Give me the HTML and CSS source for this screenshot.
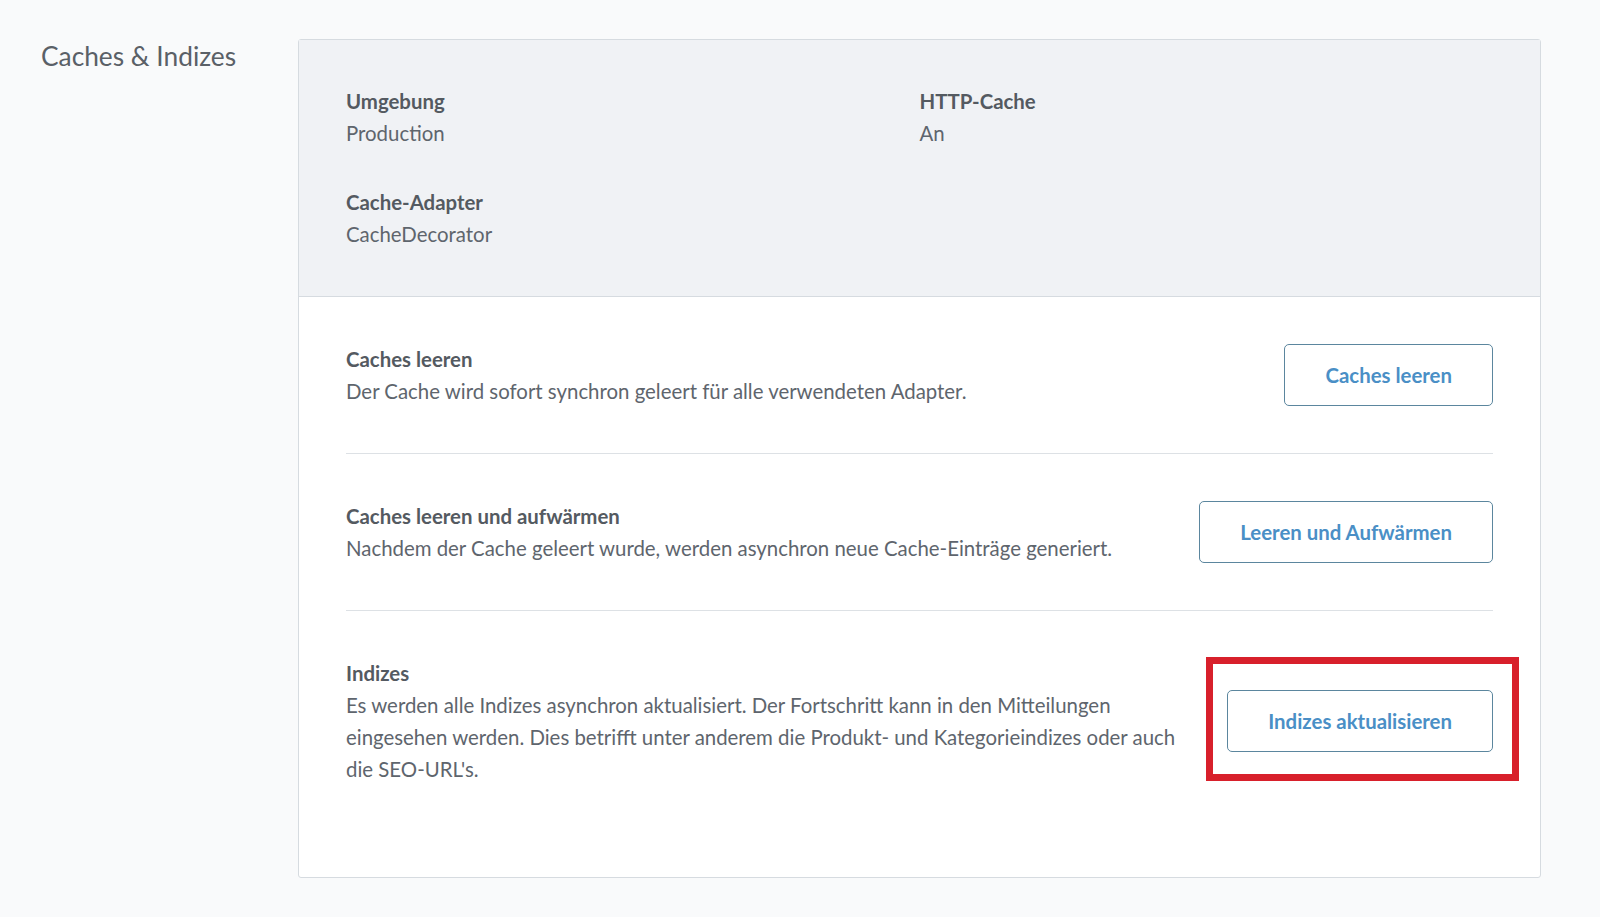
FILE: index.html
```html
<!DOCTYPE html>
<html lang="de">
<head>
    <meta charset="UTF-8">
    <meta name="viewport" content="width=device-width, initial-scale=1.0">
    <title>Caches &amp; Indizes</title>
    <link rel="stylesheet" href="styles.css">
</head>
<body>
    <div class="page">
        <div class="side">
            <h1 class="side-title">Caches &amp; Indizes</h1>
        </div>
        <div class="card">
            <div class="info">
                <div class="info-item">
                    <div class="label">Umgebung</div>
                    <div class="value">Production</div>
                </div>
                <div class="info-item">
                    <div class="label">HTTP-Cache</div>
                    <div class="value">An</div>
                </div>
                <div class="info-item">
                    <div class="label">Cache-Adapter</div>
                    <div class="value">CacheDecorator</div>
                </div>
            </div>
            <div class="actions">
                <div class="action-row">
                    <div class="action-text">
                        <div class="label">Caches leeren</div>
                        <div class="value">Der Cache wird sofort synchron geleert für alle verwendeten Adapter.</div>
                    </div>
                    <div class="btn-wrap">
                        <button class="btn">Caches leeren</button>
                    </div>
                </div>
                <div class="action-row">
                    <div class="action-text">
                        <div class="label">Caches leeren und aufwärmen</div>
                        <div class="value">Nachdem der Cache geleert wurde, werden asynchron neue Cache-Einträge generiert.</div>
                    </div>
                    <div class="btn-wrap">
                        <button class="btn">Leeren und Aufwärmen</button>
                    </div>
                </div>
                <div class="action-row">
                    <div class="action-text">
                        <div class="label">Indizes</div>
                        <div class="value">Es werden alle Indizes asynchron aktualisiert. Der Fortschritt kann in den Mitteilungen eingesehen werden. Dies betrifft unter anderem die Produkt- und Kategorieindizes oder auch die SEO-URL's.</div>
                    </div>
                    <div class="btn-wrap">
                        <button class="btn">Indizes aktualisieren</button>
                        <!-- markierung -->
                        <span class="highlight"></span>
                    </div>
                </div>
            </div>
        </div>
    </div>
</body>
</html>
```

FILE: styles.css
```css
html, body {
    margin: 0;
    padding: 0;
    background-color: #f9fafb;
}

body {
    font-family: "Lato", "Open Sans", sans-serif;
    font-size: 20.4px;
    line-height: 32px;
    color: #5c636b;
}

.page {
    display: flex;
    padding: 39px 0 0 41px;
}

.side {
    width: 257px;
    flex-shrink: 0;
}

.side-title {
    margin: 0;
    font-size: 26.3px;
    font-weight: 400;
    line-height: 34px;
    color: #5a6067;
}

.card {
    width: 1241px;
    border: 1px solid #d6dbe0;
    border-radius: 3px;
    background-color: #ffffff;
    margin-bottom: 40px;
}

.info {
    display: grid;
    grid-template-columns: 1fr 1fr;
    row-gap: 37px;
    padding: 45px 47px 46px;
    background-color: #f0f2f5;
    border-bottom: 1px solid #d6dbe0;
}

.label {
    font-weight: 700;
    color: #545a61;
}

.value {
    color: #5e656d;
}

.actions {
    padding: 0 47px 46px 47px;
}

.action-row {
    display: flex;
    align-items: center;
    justify-content: space-between;
    gap: 28px;
    padding: 46px 0;
    border-bottom: 1px solid #dde1e5;
}

.action-row:last-child {
    border-bottom: none;
}

.btn-wrap {
    position: relative;
    flex-shrink: 0;
}

.btn {
    height: 62px;
    padding: 0 40px;
    border: 1px solid #5b869e;
    border-radius: 5px;
    background-color: #ffffff;
    font-family: inherit;
    font-size: 20.4px;
    font-weight: 700;
    color: #4a8fc6;
    cursor: pointer;
}

.highlight {
    position: absolute;
    top: -33px;
    right: -26px;
    bottom: -29px;
    left: -21px;
    border: 7px solid #d8202b;
    pointer-events: none;
}
```
